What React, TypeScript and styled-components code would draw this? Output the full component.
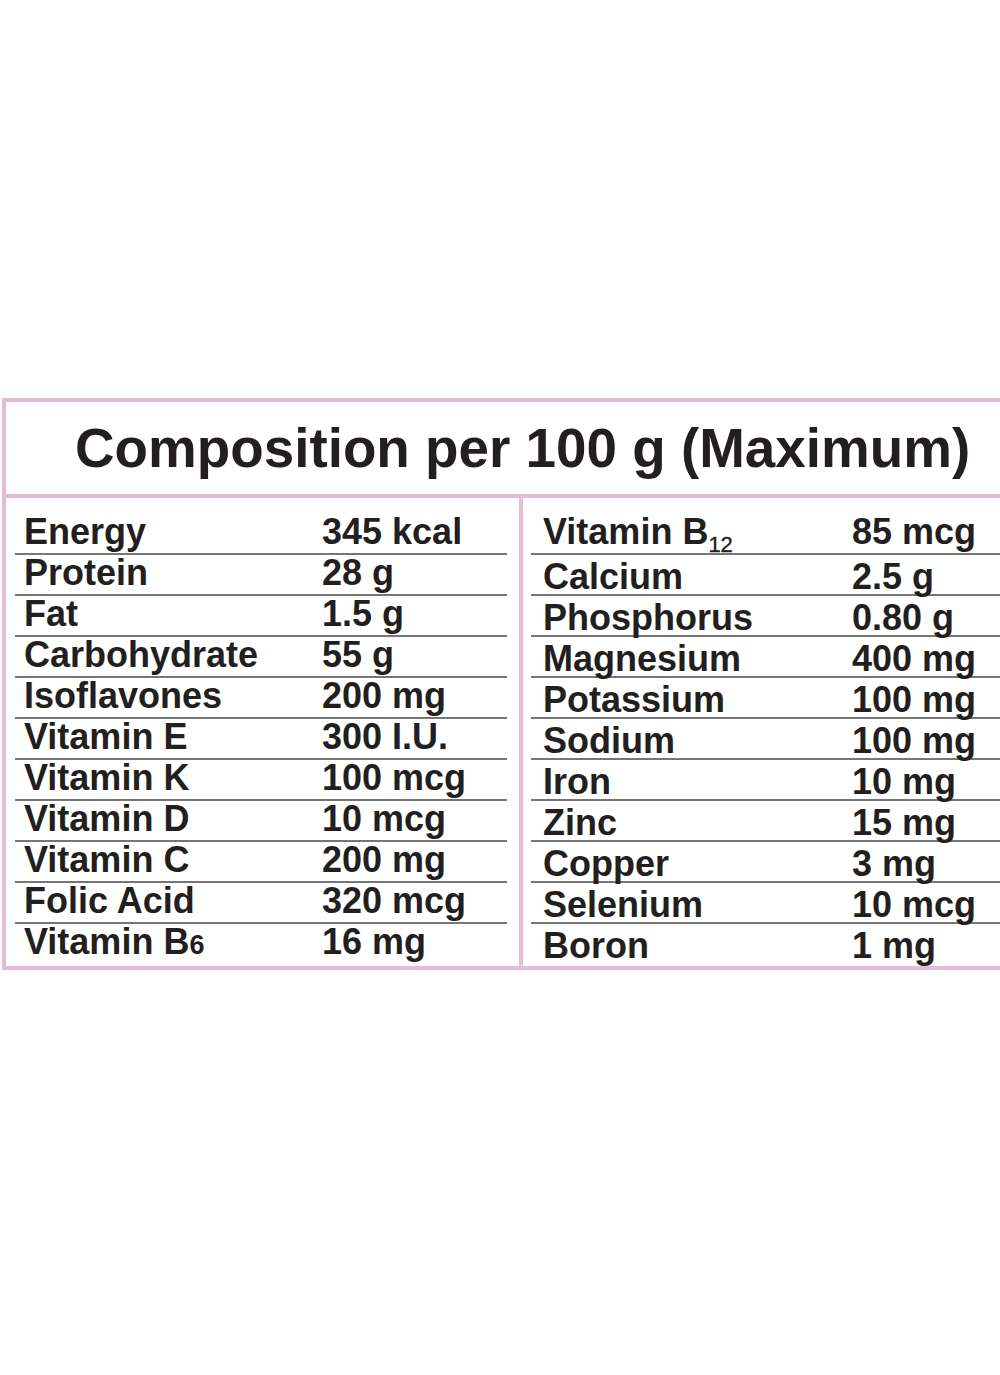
import React from 'react';
import styled, { createGlobalStyle } from 'styled-components';

const GlobalStyle = createGlobalStyle`
  html, body {
    margin: 0;
    padding: 0;
    background: #ffffff;
  }
  body {
    font-family: 'Liberation Sans', Arial, sans-serif;
    color: #231f20;
  }
`;

const PINK = '#e6bcd9';

const Page = styled.div`
  width: 1000px;
  height: 1375px;
  padding-top: 398px;
  padding-left: 2px;
  box-sizing: border-box;
`;

const Card = styled.div`
  width: 998px;
  border-top: 4px solid ${PINK};
  border-left: 4px solid ${PINK};
  border-bottom: 4px solid ${PINK};
  box-sizing: border-box;
`;

const Title = styled.h1`
  margin: 0;
  height: 92px;
  line-height: 92px;
  padding-left: 69px;
  font-size: 54.8px;
  font-weight: 700;
  color: #231f20;
  border-bottom: 4px solid ${PINK};
  white-space: nowrap;
`;

const Body = styled.div`
  display: grid;
  grid-template-columns: 517px 1fr;
`;

const Column = styled.div<{ $left: number; $right: number; $divider?: boolean }>`
  padding: 16px ${({ $right }) => $right}px 1px ${({ $left }) => $left}px;
  border-right: ${({ $divider }) => ($divider ? `4px solid ${PINK}` : 'none')};
`;

const Row = styled.div<{ $indent: number; $drop: number; $valueAt: number }>`
  display: grid;
  grid-template-columns: ${({ $valueAt }) => $valueAt}px 1fr;
  height: 41px;
  box-sizing: border-box;
  padding-top: ${({ $drop }) => $drop}px;
  padding-left: ${({ $indent }) => $indent}px;
  border-bottom: 2px solid #767676;
  font-size: 36px;
  font-weight: 700;
  line-height: 31px;
  white-space: nowrap;

  &:last-child {
    border-bottom: none;
  }
`;

const Cell = styled.span``;

const Sub = styled.sub`
  font-size: 22px;
  vertical-align: -8px;
  line-height: 0;
  font-weight: 400;
  -webkit-text-stroke: 0.4px #231f20;
`;

const Small = styled.span`
  font-size: 27px;
  line-height: 0;
`;

type Item = { name: React.ReactNode; value: string };

const leftItems: Item[] = [
  { name: 'Energy', value: '345 kcal' },
  { name: 'Protein', value: '28 g' },
  { name: 'Fat', value: '1.5 g' },
  { name: 'Carbohydrate', value: '55 g' },
  { name: 'Isoflavones', value: '200 mg' },
  { name: 'Vitamin E', value: '300 I.U.' },
  { name: 'Vitamin K', value: '100 mcg' },
  { name: 'Vitamin D', value: '10 mcg' },
  { name: 'Vitamin C', value: '200 mg' },
  { name: 'Folic Acid', value: '320 mcg' },
  { name: <>Vitamin B<Small>6</Small></>, value: '16 mg' },
];

const rightItems: Item[] = [
  { name: <>Vitamin B<Sub>12</Sub></>, value: '85 mcg' },
  { name: 'Calcium', value: '2.5 g' },
  { name: 'Phosphorus', value: '0.80 g' },
  { name: 'Magnesium', value: '400 mg' },
  { name: 'Potassium', value: '100 mg' },
  { name: 'Sodium', value: '100 mg' },
  { name: 'Iron', value: '10 mg' },
  { name: 'Zinc', value: '15 mg' },
  { name: 'Copper', value: '3 mg' },
  { name: 'Selenium', value: '10 mcg' },
  { name: 'Boron', value: '1 mg' },
];

export default function App() {
  return (
    <Page>
      <GlobalStyle />
      <Card>
        <Title>Composition per 100 g (Maximum)</Title>
        <Body>
          <Column $left={9} $right={12} $divider>
            {leftItems.map((item, i) => (
              <Row key={i} $indent={9} $drop={2} $valueAt={298}>
                <Cell>{item.name}</Cell>
                <Cell>{item.value}</Cell>
              </Row>
            ))}
          </Column>
          <Column $left={8} $right={0}>
            {rightItems.map((item, i) => (
              <Row key={i} $indent={12} $drop={i === 0 ? 2 : 6} $valueAt={309}>
                <Cell>{item.name}</Cell>
                <Cell>{item.value}</Cell>
              </Row>
            ))}
          </Column>
        </Body>
      </Card>
    </Page>
  );
}
